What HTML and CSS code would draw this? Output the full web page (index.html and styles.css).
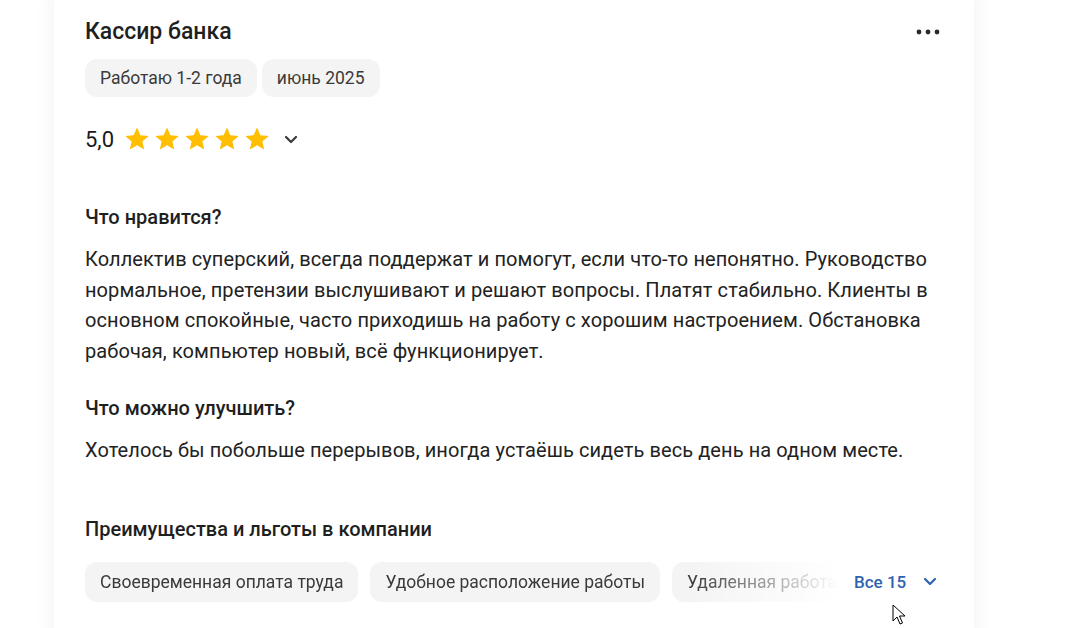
FILE: index.html
```html
<!DOCTYPE html>
<html lang="ru">
<head>
  <meta charset="UTF-8">
  <title>Отзыв — Кассир банка</title>
  <link rel="stylesheet" href="styles.css">
</head>
<body>

<div class="review">
  <div class="review-head">
    <h2 class="review-title">Кассир банка</h2>
    <button class="more" aria-label="Ещё">
      <svg width="24" height="6" viewBox="0 0 24 6"><circle cx="3" cy="3" r="2.4"/><circle cx="12" cy="3" r="2.4"/><circle cx="21" cy="3" r="2.4"/></svg>
    </button>
  </div>

  <div class="tags">
    <span class="tag">Работаю 1-2 года</span>
    <span class="tag">июнь 2025</span>
  </div>

  <div class="rating">
    <span class="rating-value">5,0</span>
    <span class="stars">
      <svg viewBox="0 0 24 24"><path d="M12 2.2l2.9 6.6 7.1.6-5.4 4.7 1.6 7-6.2-3.7-6.2 3.7 1.6-7L2 9.4l7.1-.6z"/></svg>
      <svg viewBox="0 0 24 24"><path d="M12 2.2l2.9 6.6 7.1.6-5.4 4.7 1.6 7-6.2-3.7-6.2 3.7 1.6-7L2 9.4l7.1-.6z"/></svg>
      <svg viewBox="0 0 24 24"><path d="M12 2.2l2.9 6.6 7.1.6-5.4 4.7 1.6 7-6.2-3.7-6.2 3.7 1.6-7L2 9.4l7.1-.6z"/></svg>
      <svg viewBox="0 0 24 24"><path d="M12 2.2l2.9 6.6 7.1.6-5.4 4.7 1.6 7-6.2-3.7-6.2 3.7 1.6-7L2 9.4l7.1-.6z"/></svg>
      <svg viewBox="0 0 24 24"><path d="M12 2.2l2.9 6.6 7.1.6-5.4 4.7 1.6 7-6.2-3.7-6.2 3.7 1.6-7L2 9.4l7.1-.6z"/></svg>
    </span>
    <svg class="chevron dark" width="14" height="9" viewBox="0 0 14 9"><path d="M2 2l5 5 5-5"/></svg>
  </div>

  <h3 class="section-title first">Что нравится?</h3>
  <p class="section-text">Коллектив суперский, всегда поддержат и помогут, если что-то непонятно. Руководство нормальное, претензии выслушивают и решают вопросы. Платят стабильно. Клиенты в основном спокойные, часто приходишь на работу с хорошим настроением. Обстановка рабочая, компьютер новый, всё функционирует.</p>

  <h3 class="section-title">Что можно улучшить?</h3>
  <p class="section-text">Хотелось бы побольше перерывов, иногда устаёшь сидеть весь день на одном месте.</p>

  <h3 class="section-title benefits-title">Преимущества и льготы в компании</h3>
  <div class="benefits">
    <div class="benefits-list">
      <span class="tag big">Своевременная оплата труда</span>
      <span class="tag big">Удобное расположение работы</span>
      <span class="tag big">Удаленная работа</span>
    </div>
    <button class="show-all">Все 15
      <svg class="chevron blue" width="14" height="9" viewBox="0 0 14 9"><path d="M2 2l5 5 5-5"/></svg>
    </button>
    <svg class="cursor" width="14" height="22" viewBox="0 0 14 22"><path d="M1 1v16l4-4 3 7 2.5-1-3-7h5.5z"/></svg>
  </div>
</div>

</body>
</html>
```

FILE: styles.css
```css
html, body {
  margin: 0;
  padding: 0;
  background: #fff;
  font-family: Roboto, "Noto Sans", Arial, sans-serif;
  color: #1f1f1f;
  overflow: hidden;
}

.review {
  width: 920px;
  margin-left: 54px;
  margin-top: -10px;
  padding: 28px 32px 40px 31px;
  box-sizing: border-box;
  background: #fff;
  box-shadow: 0 0 22px rgba(0, 0, 0, 0.06);
}

.review-head {
  display: flex;
  justify-content: space-between;
  align-items: center;
}

.review-title {
  margin: 0;
  font-size: 23px;
  line-height: 28px;
  font-weight: 500;
  color: #1f1f1f;
}

.more {
  border: none;
  background: none;
  padding: 0;
  margin-right: 2px;
  display: flex;
  cursor: pointer;
}

.more svg {
  fill: #2a2a2a;
}

.tags {
  display: flex;
  gap: 5px;
  margin-top: 13px;
}

.tag {
  display: inline-flex;
  align-items: center;
  height: 38px;
  padding: 0 15px;
  background: #f4f4f4;
  border-radius: 12px;
  font-size: 17.5px;
  color: #3a3a3a;
  white-space: nowrap;
}

.rating {
  display: flex;
  align-items: center;
  height: 32px;
  margin-top: 26px;
}

.rating-value {
  font-size: 22px;
  font-weight: 400;
  margin-right: 9px;
  color: #1a1a1a;
}

.stars {
  display: flex;
  gap: 2px;
}

.stars svg {
  width: 28px;
  height: 28px;
  fill: #ffbe00;
}

.chevron path {
  fill: none;
  stroke-width: 2.2;
  stroke-linecap: round;
  stroke-linejoin: round;
}

.chevron.dark {
  margin-left: 13px;
}

.chevron.dark path {
  stroke: #3a3a3a;
}

.chevron.blue path {
  stroke: #2d63b0;
}

.section-title {
  margin: 30px 0 0;
  font-size: 20px;
  line-height: 24px;
  font-weight: 500;
  color: #1f1f1f;
}

.section-title.first {
  margin-top: 50px;
}

.section-text {
  margin: 15px 0 0;
  font-size: 20px;
  line-height: 30.5px;
  letter-spacing: 0.08px;
  color: #222;
}

.benefits-title {
  margin-top: 51px;
}

.benefits {
  position: relative;
  display: flex;
  align-items: center;
  margin-top: 21px;
}

.benefits-list {
  display: flex;
  gap: 12px;
  width: 753px;
  overflow: hidden;
  -webkit-mask-image: linear-gradient(to right, #000 605px, transparent 753px);
  mask-image: linear-gradient(to right, #000 605px, transparent 753px);
}

.tag.big {
  height: 40px;
}

.show-all {
  display: flex;
  align-items: center;
  gap: 17px;
  border: none;
  background: none;
  padding: 0;
  margin-left: 16px;
  font-family: inherit;
  font-size: 17px;
  font-weight: 500;
  color: #2d63b0;
  cursor: pointer;
}

.cursor {
  position: absolute;
  left: 807px;
  top: 42px;
  fill: #fff;
  stroke: #000;
  stroke-width: 1;
}
```
